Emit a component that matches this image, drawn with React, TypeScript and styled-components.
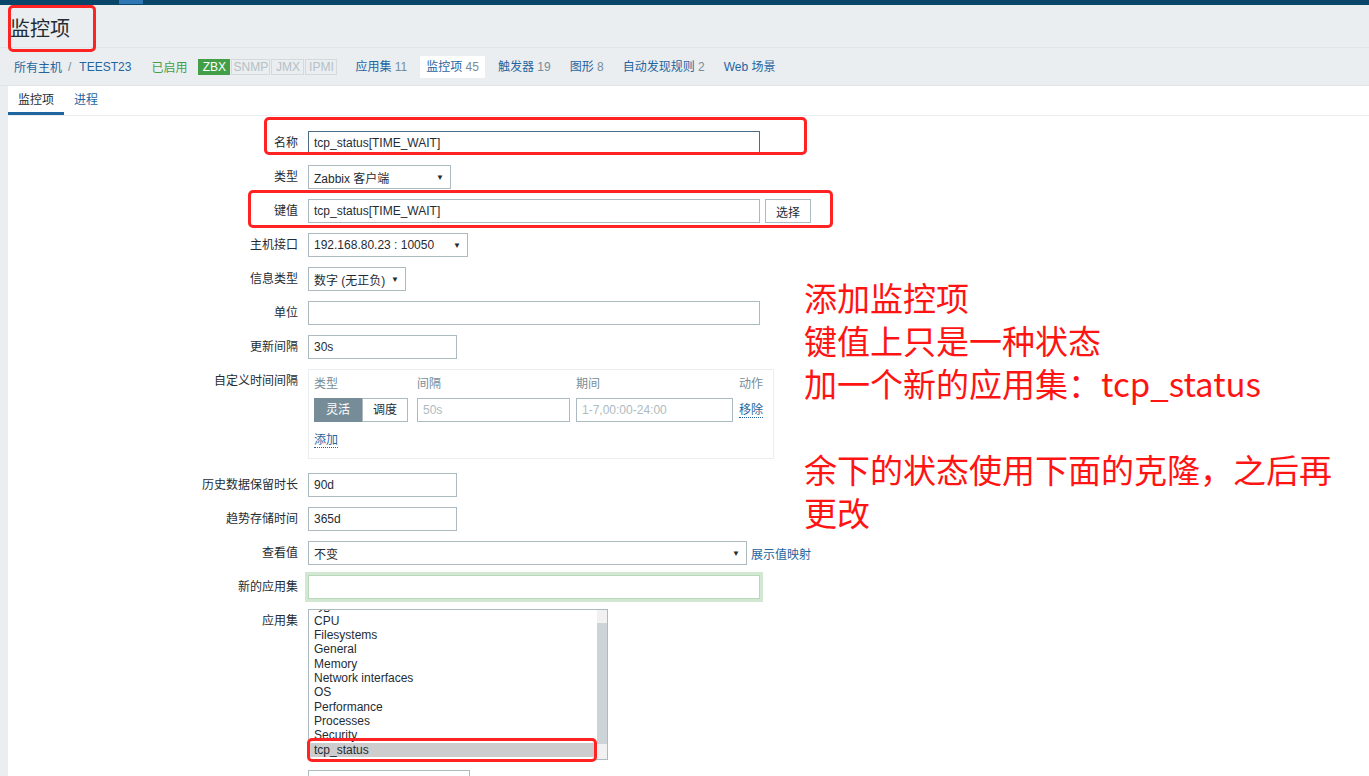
import React from "react";
import styled, { createGlobalStyle } from "styled-components";

const FONT = `"Liberation Sans", Arial, "Noto Sans CJK SC", sans-serif`;

const GlobalStyle = createGlobalStyle`
  html, body { margin: 0; padding: 0; overflow: hidden; }
  body {
    background: #ebeef0;
    font-family: ${FONT};
    font-size: 12px;
    color: #1f2c33;
  }
  * { box-sizing: border-box; }
`;

const Page = styled.div`
  position: relative;
  width: 100%;
  height: 100vh;
  overflow: hidden;
  display: flex;
  flex-direction: column;
`;

const TopBar = styled.div`
  height: 5px;
  flex-shrink: 0;
  background: #0a466a;
  padding-left: 119px;
  display: flex;
`;

const TopBarActive = styled.div`
  width: 24px;
  height: 4px;
  background: #2f76b5;
`;

const Header = styled.header`
  height: 43px;
  flex-shrink: 0;
  padding: 12px 0 0 10px;
  border-bottom: 1px solid #dfe4e7;
`;

const Title = styled.h1`
  margin: 0;
  font-size: 20px;
  line-height: 24px;
  font-weight: normal;
  color: #1f2c33;
`;

const HostNav = styled.nav`
  height: 38px;
  flex-shrink: 0;
  display: flex;
  align-items: center;
  padding-left: 14px;
  border-bottom: 1px solid #dfe4e7;
`;

const Crumb = styled.a`
  color: #1f65a0;
  text-decoration: none;
`;

const CrumbSep = styled.span`
  color: #768d99;
  margin: 0 8px 0 6px;
`;

const Enabled = styled.span`
  color: #429e47;
  margin-left: 20px;
`;

const StatusGroup = styled.div`
  display: flex;
  margin-left: 11px;
  margin-right: 11px;
`;

const StatusTag = styled.span<{ $on?: boolean; $w: number }>`
  width: ${(p) => p.$w}px;
  height: 16px;
  line-height: 14px;
  text-align: center;
  margin-right: 1px;
  border: 1px solid ${(p) => (p.$on ? "#429e47" : "#d3dadd")};
  background: ${(p) => (p.$on ? "#429e47" : "#ebeef0")};
  color: ${(p) => (p.$on ? "#ffffff" : "#b3c0c6")};
`;

const NavItem = styled.a<{ $active?: boolean }>`
  height: 22px;
  line-height: 22px;
  padding: 0 6px;
  margin-right: 7px;
  color: #1f65a0;
  text-decoration: none;
  background: ${(p) => (p.$active ? "#ffffff" : "transparent")};
`;

const Count = styled.span`
  color: #768d99;
`;

const Container = styled.main`
  flex: 1;
  margin-left: 8px;
  background: #ffffff;
`;

const Tabs = styled.div`
  display: flex;
  height: 30px;
  border-bottom: 1px solid #ebeef0;
`;

const Tab = styled.a<{ $active?: boolean }>`
  padding: 0 10px;
  line-height: 29px;
  color: ${(p) => (p.$active ? "#1f2c33" : "#1f65a0")};
  border-bottom: 3px solid ${(p) => (p.$active ? "#1f65a0" : "transparent")};
  text-decoration: none;
`;

const Form = styled.div`
  padding-top: 15px;
`;

const FormRow = styled.div<{ $gap?: number }>`
  display: grid;
  grid-template-columns: 290px auto;
  column-gap: 10px;
  align-items: start;
  margin-bottom: ${(p) => p.$gap ?? 10}px;
`;

const Label = styled.label`
  text-align: right;
  line-height: 24px;
  white-space: nowrap;
  color: #1f2c33;
`;

const Controls = styled.div`
  display: flex;
  align-items: center;
  gap: 5px;
`;

const Input = styled.input<{ $w: number; $focus?: boolean; $glow?: boolean }>`
  width: ${(p) => p.$w}px;
  height: 24px;
  padding: 0 5px;
  border: 1px solid ${(p) => (p.$focus ? "#4d6e86" : p.$glow ? "#b9d7b9" : "#acbbc2")};
  box-shadow: ${(p) => (p.$glow ? "0 0 0 3px #d2e8d2" : "none")};
  font-family: ${FONT};
  font-size: 12px;
  color: #1f2c33;
  background: #ffffff;
  outline: none;
  &::placeholder { color: #acbbc2; }
`;

const Select = styled.div<{ $w: number }>`
  width: ${(p) => p.$w}px;
  height: 24px;
  padding: 0 6px 0 5px;
  border: 1px solid #acbbc2;
  background: #ffffff;
  display: flex;
  align-items: center;
  justify-content: space-between;
  white-space: nowrap;
`;

const Arrow = styled.span`
  font-size: 8px;
  color: #1f2c33;
`;

const Button = styled.button`
  width: 46px;
  height: 24px;
  border: 1px solid #acbbc2;
  background: #ffffff;
  font-family: ${FONT};
  font-size: 12px;
  color: #1f2c33;
  padding: 0;
`;

const IntervalBox = styled.div`
  width: 466px;
  border: 1px solid #ebeef0;
  padding: 2px 5px 6px;
`;

const IntervalGrid = styled.div`
  display: grid;
  grid-template-columns: 97px 153px 157px auto;
  column-gap: 6px;
  row-gap: 2px;
  align-items: center;
`;

const HeadCell = styled.div`
  line-height: 24px;
  color: #768d99;
`;

const Toggle = styled.div`
  display: flex;
`;

const ToggleBtn = styled.span<{ $active?: boolean; $w: number }>`
  width: ${(p) => p.$w}px;
  height: 24px;
  line-height: 22px;
  text-align: center;
  border: 1px solid ${(p) => (p.$active ? "#768d99" : "#acbbc2")};
  background: ${(p) => (p.$active ? "#768d99" : "#ffffff")};
  color: ${(p) => (p.$active ? "#ffffff" : "#1f2c33")};
`;

const DottedLink = styled.a`
  color: #1f65a0;
  text-decoration: none;
  border-bottom: 1px dotted #1f65a0;
  line-height: 14px;
  align-self: center;
  justify-self: start;
`;

const AddRow = styled.div`
  margin-top: 6px;
  height: 24px;
  display: flex;
  align-items: center;
`;

const PlainLink = styled.a`
  color: #1f65a0;
  text-decoration: none;
  margin-left: -1px;
`;

const ListBox = styled.div`
  width: 300px;
  height: 151px;
  border: 1px solid #acbbc2;
  display: flex;
  overflow: hidden;
  background: #ffffff;
`;

const ListItems = styled.div`
  flex: 1;
  overflow: hidden;
`;

const ListInner = styled.div`
  margin-top: -10.5px;
`;

const Option = styled.div<{ $selected?: boolean }>`
  height: 14.33px;
  line-height: 14.33px;
  padding-left: 5px;
  white-space: nowrap;
  color: #1f2c33;
  background: ${(p) => (p.$selected ? "#cdcdcd" : "transparent")};
`;

const ScrollTrack = styled.div`
  width: 10px;
  background: #f1f1f1;
  padding-top: 13px;
  padding-bottom: 15px;
  display: flex;
`;

const ScrollThumb = styled.div`
  flex: 1;
  background: #cdd4d8;
`;

const Annotation = styled.div`
  position: absolute;
  left: 804px;
  top: 276px;
  font-family: "Noto Sans CJK SC", sans-serif;
  font-size: 33px;
  line-height: 43px;
  color: #ff1414;
  white-space: pre;
`;

const RedBox = styled.div<{ $x: number; $y: number; $w: number; $h: number }>`
  position: absolute;
  left: ${(p) => p.$x}px;
  top: ${(p) => p.$y}px;
  width: ${(p) => p.$w}px;
  height: ${(p) => p.$h}px;
  border: 3px solid #ff2323;
  border-radius: 5px;
  pointer-events: none;
`;

const apps = [
  "-无-",
  "CPU",
  "Filesystems",
  "General",
  "Memory",
  "Network interfaces",
  "OS",
  "Performance",
  "Processes",
  "Security",
  "tcp_status",
];

export default function App() {
  return (
    <Page>
      <GlobalStyle />
      <TopBar>
        <TopBarActive />
      </TopBar>
      <Header>
        <Title>监控项</Title>
      </Header>
      <HostNav>
        <Crumb>所有主机</Crumb>
        <CrumbSep>/</CrumbSep>
        <Crumb>TEEST23</Crumb>
        <Enabled>已启用</Enabled>
        <StatusGroup>
          <StatusTag $on $w={32}>ZBX</StatusTag>
          <StatusTag $w={39}>SNMP</StatusTag>
          <StatusTag $w={33}>JMX</StatusTag>
          <StatusTag $w={32}>IPMI</StatusTag>
        </StatusGroup>
        <NavItem>
          应用集 <Count>11</Count>
        </NavItem>
        <NavItem $active>
          监控项 <Count>45</Count>
        </NavItem>
        <NavItem>
          触发器 <Count>19</Count>
        </NavItem>
        <NavItem>
          图形 <Count>8</Count>
        </NavItem>
        <NavItem>
          自动发现规则 <Count>2</Count>
        </NavItem>
        <NavItem>Web 场景</NavItem>
      </HostNav>
      <Container>
        <Tabs>
          <Tab $active>监控项</Tab>
          <Tab>进程</Tab>
        </Tabs>
        <Form>
          <FormRow>
            <Label>名称</Label>
            <Controls>
              <Input $w={452} $focus readOnly defaultValue="tcp_status[TIME_WAIT]" />
            </Controls>
          </FormRow>
          <FormRow>
            <Label>类型</Label>
            <Controls>
              <Select $w={143}>
                Zabbix 客户端<Arrow>▼</Arrow>
              </Select>
            </Controls>
          </FormRow>
          <FormRow>
            <Label>键值</Label>
            <Controls>
              <Input $w={452} readOnly defaultValue="tcp_status[TIME_WAIT]" />
              <Button>选择</Button>
            </Controls>
          </FormRow>
          <FormRow>
            <Label>主机接口</Label>
            <Controls>
              <Select $w={160}>
                192.168.80.23 : 10050<Arrow>▼</Arrow>
              </Select>
            </Controls>
          </FormRow>
          <FormRow>
            <Label>信息类型</Label>
            <Controls>
              <Select $w={98}>
                数字 (无正负)<Arrow>▼</Arrow>
              </Select>
            </Controls>
          </FormRow>
          <FormRow>
            <Label>单位</Label>
            <Controls>
              <Input $w={452} readOnly defaultValue="" />
            </Controls>
          </FormRow>
          <FormRow>
            <Label>更新间隔</Label>
            <Controls>
              <Input $w={149} readOnly defaultValue="30s" />
            </Controls>
          </FormRow>
          <FormRow $gap={14}>
            <Label>自定义时间间隔</Label>
            <IntervalBox>
              <IntervalGrid>
                <HeadCell>类型</HeadCell>
                <HeadCell>间隔</HeadCell>
                <HeadCell>期间</HeadCell>
                <HeadCell>动作</HeadCell>
                <Toggle>
                  <ToggleBtn $active $w={48}>灵活</ToggleBtn>
                  <ToggleBtn $w={46}>调度</ToggleBtn>
                </Toggle>
                <Input $w={153} readOnly placeholder="50s" />
                <Input $w={157} readOnly placeholder="1-7,00:00-24:00" />
                <DottedLink>移除</DottedLink>
              </IntervalGrid>
              <AddRow>
                <DottedLink>添加</DottedLink>
              </AddRow>
            </IntervalBox>
          </FormRow>
          <FormRow>
            <Label>历史数据保留时长</Label>
            <Controls>
              <Input $w={149} readOnly defaultValue="90d" />
            </Controls>
          </FormRow>
          <FormRow>
            <Label>趋势存储时间</Label>
            <Controls>
              <Input $w={149} readOnly defaultValue="365d" />
            </Controls>
          </FormRow>
          <FormRow>
            <Label>查看值</Label>
            <Controls>
              <Select $w={439}>
                不变<Arrow>▼</Arrow>
              </Select>
              <PlainLink>展示值映射</PlainLink>
            </Controls>
          </FormRow>
          <FormRow>
            <Label>新的应用集</Label>
            <Controls>
              <Input $w={452} $glow readOnly defaultValue="" />
            </Controls>
          </FormRow>
          <FormRow>
            <Label>应用集</Label>
            <ListBox>
              <ListItems>
                <ListInner>
                  {apps.map((a) => (
                    <Option key={a} $selected={a === "tcp_status"}>
                      {a}
                    </Option>
                  ))}
                </ListInner>
              </ListItems>
              <ScrollTrack>
                <ScrollThumb />
              </ScrollTrack>
            </ListBox>
          </FormRow>
          <FormRow>
            <Label />
            <Controls>
              <Select $w={162} />
            </Controls>
          </FormRow>
        </Form>
      </Container>

      <Annotation>
        {"添加监控项\n键值上只是一种状态\n加一个新的应用集：tcp_status\n\n余下的状态使用下面的克隆，之后再\n更改"}
      </Annotation>

      <RedBox $x={8} $y={5} $w={88} $h={47} />
      <RedBox $x={264} $y={117} $w={543} $h={38} />
      <RedBox $x={248} $y={190} $w={585} $h={38} />
      <RedBox $x={307} $y={738} $w={290} $h={24} />
    </Page>
  );
}
